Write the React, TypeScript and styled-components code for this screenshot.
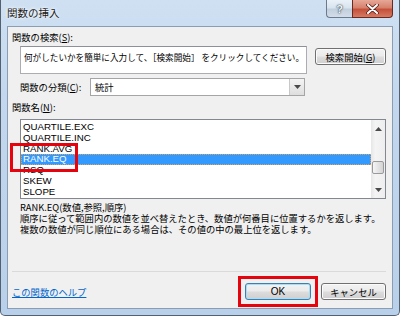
import React from 'react';
import styled, { createGlobalStyle, css } from 'styled-components';

const GlobalStyle = createGlobalStyle`
  html, body {
    margin: 0;
    padding: 0;
    background: #ffffff;
  }
  body {
    font-family: "Liberation Sans", "Noto Sans CJK JP", sans-serif;
    color: #000;
  }
`;

const Window = styled.div`
  width: 400px;
  height: 316px;
  box-sizing: border-box;
  display: flex;
  flex-direction: column;
  padding: 0 6px 6px 6px;
  border: 1px solid #52606f;
  border-top: none;
  border-radius: 0 0 5px 5px;
  background: linear-gradient(180deg, #cfe0f2 0%, #c3d8ee 30%, #b9d0ea 100%);
`;

const TitleBar = styled.div`
  height: 26px;
  display: flex;
  align-items: flex-start;
  flex-shrink: 0;
`;

const Title = styled.div`
  font-family: "Noto Sans CJK JP", sans-serif;
  font-size: 10.5px;
  line-height: 25px;
  height: 26px;
  color: #1b1b1b;
  text-shadow: 0 0 4px #ffffff, 0 0 2px #ffffff;
`;

const Caption = styled.div`
  margin-left: auto;
  display: flex;
`;

const CaptionButton = styled.div<{ $close?: boolean }>`
  height: 18px;
  box-sizing: border-box;
  display: flex;
  align-items: center;
  justify-content: center;
  color: #fff;
  font-weight: bold;
  font-size: 11px;
  ${(p) =>
    p.$close
      ? css`
          width: 41px;
          border: 1px solid #6b2a20;
          border-top: none;
          border-radius: 0 0 4px 0;
          background: linear-gradient(180deg, #e7a797 0%, #d6826d 45%, #c5503b 55%, #d57a62 100%);
        `
      : css`
          width: 26px;
          border: 1px solid #6b7a8d;
          border-top: none;
          border-right: none;
          border-radius: 0 0 0 4px;
          background: linear-gradient(180deg, #eaf1f8 0%, #d9e4ef 45%, #c1cfdd 55%, #d3dde8 100%);
          color: #eef3f8;
          text-shadow: 0 0 1px #33404e, 0 0 2px #33404e;
        `}
`;

const Client = styled.div`
  flex: 1;
  display: flex;
  flex-direction: column;
  background: #f0f0f0;
  border: 1px solid #8a9db3;
  padding: 4px 6px 0 4px;
  font-family: "Noto Sans CJK JP", sans-serif;
  font-size: 9.3px;
`;

const Label = styled.div<{ $top?: number; $indent?: number }>`
  line-height: 12px;
  height: 12px;
  white-space: nowrap;
  margin-top: ${(p) => p.$top ?? 0}px;
  padding-left: ${(p) => p.$indent ?? 0}px;
`;

const Row = styled.div<{ $top?: number; $indent?: number }>`
  display: flex;
  align-items: center;
  margin-top: ${(p) => p.$top ?? 0}px;
  padding-left: ${(p) => p.$indent ?? 0}px;
`;

const SearchBox = styled.div`
  width: 287px;
  height: 28px;
  box-sizing: border-box;
  background: #fff;
  border: 1px solid #abadb3;
  border-top-color: #8e9098;
  padding: 4px 3px 0 3px;
  font-size: 8.6px;
  line-height: 12px;
  white-space: nowrap;
  overflow: hidden;
`;

const Button = styled.div<{ $w: number; $primary?: boolean }>`
  width: ${(p) => p.$w}px;
  height: 17px;
  box-sizing: border-box;
  display: flex;
  align-items: center;
  justify-content: center;
  border-radius: 3px;
  font-size: 9.3px;
  white-space: nowrap;
  background: linear-gradient(180deg, #f2f2f2 0%, #ebebeb 48%, #dddddd 52%, #cfcfcf 100%);
  border: 1px solid ${(p) => (p.$primary ? '#3c7fb1' : '#707070')};
  box-shadow: inset 0 0 0 1px ${(p) => (p.$primary ? '#a9dcf5' : '#fbfbfb')};
`;

const SearchButton = styled(Button)`
  margin-left: auto;
  align-self: flex-start;
  margin-top: 2px;
`;

const CategoryLabel = styled.div`
  width: 70px;
  line-height: 12px;
  white-space: nowrap;
`;

const Select = styled.div`
  width: 215px;
  height: 18px;
  box-sizing: border-box;
  display: flex;
  align-items: stretch;
  background: #fff;
  border: 1px solid #a5a5a5;
`;

const SelectText = styled.div`
  flex: 1;
  padding-left: 4px;
  line-height: 16px;
`;

const SelectArrow = styled.div`
  width: 14px;
  display: flex;
  align-items: center;
  justify-content: center;
  background: linear-gradient(180deg, #f4f4f4, #dedede);
  border-left: 1px solid #c8c8c8;
`;

const ListWrap = styled.div`
  position: relative;
  margin: 6px 0 0 8px;
`;

const ListBox = styled.div`
  height: 80px;
  box-sizing: border-box;
  display: flex;
  background: #fff;
  border: 1px solid #828790;
`;

const Items = styled.div`
  flex: 1;
  padding-top: 2px;
  font-family: "Liberation Sans", sans-serif;
  font-size: 9.7px;
`;

const Item = styled.div<{ $selected?: boolean }>`
  height: 10.8px;
  line-height: 10.8px;
  padding-left: 2px;
  box-sizing: border-box;
  ${(p) =>
    p.$selected &&
    css`
      background: #3399ff;
      color: #fff;
      outline: 1px dotted #d9a15a;
      outline-offset: -1px;
    `}
`;

const ScrollBar = styled.div`
  width: 14px;
  display: flex;
  flex-direction: column;
  align-items: center;
  background: linear-gradient(90deg, #e6e6e6, #f4f4f4 30%, #eeeeee);
`;

const ScrollArrow = styled.div`
  height: 17px;
  display: flex;
  align-items: center;
  justify-content: center;
`;

const Thumb = styled.div`
  width: 12px;
  height: 13px;
  margin-top: 24px;
  box-sizing: border-box;
  border: 1px solid #9a9a9a;
  border-radius: 2px;
  background: linear-gradient(90deg, #f6f6f6, #e4e4e4 50%, #d4d4d4);
`;

const ScrollSpace = styled.div`
  flex: 1;
`;

const Callout = styled.div`
  position: absolute;
  box-sizing: border-box;
  border: 3px solid #e5040e;
  pointer-events: none;
`;

const ListCallout = styled(Callout)`
  left: -10px;
  top: 24px;
  width: 68px;
  height: 29px;
`;

const Syntax = styled.div`
  margin-top: 2px;
  padding-left: 8px;
  line-height: 12px;
`;

const Description = styled.div`
  padding-left: 8px;
  line-height: 11px;
  white-space: nowrap;
`;

const Spacer = styled.div`
  flex: 1;
`;

const Separator = styled.div`
  height: 0;
  border-top: 1px solid #dadada;
`;

const Footer = styled.div`
  display: flex;
  align-items: center;
  margin: 11px 0 8px 0;
`;

const HelpLink = styled.a`
  color: #0066cc;
  text-decoration: underline;
  line-height: 12px;
`;

const FooterButtons = styled.div`
  margin-left: auto;
  display: flex;
  gap: 10px;
`;

const OkSlot = styled.div`
  position: relative;
`;

const OkCallout = styled(Callout)`
  inset: -7px;
`;

const ButtonLatin = styled.span`
  font-family: "Liberation Sans", sans-serif;
  font-size: 10px;
`;

const Triangle = ({ dir }: { dir: 'up' | 'down' }) => (
  <svg width="7" height="4" viewBox="0 0 7 4">
    <polygon points={dir === 'up' ? '0,4 3.5,0 7,4' : '0,0 7,0 3.5,4'} fill="#4a4a4a" />
  </svg>
);

const functions = ['QUARTILE.EXC', 'QUARTILE.INC', 'RANK.AVG', 'RANK.EQ', 'RSQ', 'SKEW', 'SLOPE'];

export default function App() {
  return (
    <>
      <GlobalStyle />
      <Window>
        <TitleBar>
          <Title>関数の挿入</Title>
          <Caption>
            <CaptionButton>?</CaptionButton>
            <CaptionButton $close>
              <svg width="13" height="10" viewBox="0 0 13 10">
                <path d="M2 1 L11 9 M11 1 L2 9" stroke="#5a1e16" strokeWidth="3.6" strokeLinecap="round" />
                <path d="M2 1 L11 9 M11 1 L2 9" stroke="#ffffff" strokeWidth="2" strokeLinecap="round" />
              </svg>
            </CaptionButton>
          </Caption>
        </TitleBar>
        <Client>
          <Label>
            関数の検索(<u>S</u>):
          </Label>
          <Row $top={3} $indent={8}>
            <SearchBox>何がしたいかを簡単に入力して、［検索開始］ をクリックしてください。</SearchBox>
            <SearchButton $w={71}>
              検索開始(<u>G</u>)
            </SearchButton>
          </Row>
          <Row $top={4} $indent={8}>
            <CategoryLabel>
              関数の分類(<u>C</u>):
            </CategoryLabel>
            <Select>
              <SelectText>統計</SelectText>
              <SelectArrow>
                <Triangle dir="down" />
              </SelectArrow>
            </Select>
          </Row>
          <Label $top={5}>
            関数名(<u>N</u>):
          </Label>
          <ListWrap>
            <ListBox>
              <Items>
                {functions.map((name) => (
                  <Item key={name} $selected={name === 'RANK.EQ'}>
                    {name}
                  </Item>
                ))}
              </Items>
              <ScrollBar>
                <ScrollArrow>
                  <Triangle dir="up" />
                </ScrollArrow>
                <Thumb />
                <ScrollSpace />
                <ScrollArrow>
                  <Triangle dir="down" />
                </ScrollArrow>
              </ScrollBar>
            </ListBox>
            <ListCallout />
          </ListWrap>
          <Syntax>RANK.EQ(数値,参照,順序)</Syntax>
          <Description>順序に従って範囲内の数値を並べ替えたとき、数値が何番目に位置するかを返します。</Description>
          <Description>複数の数値が同じ順位にある場合は、その値の中の最上位を返します。</Description>
          <Spacer />
          <Separator />
          <Footer>
            <HelpLink>この関数のヘルプ</HelpLink>
            <FooterButtons>
              <OkSlot>
                <Button $w={66} $primary>
                  <ButtonLatin>OK</ButtonLatin>
                </Button>
                <OkCallout />
              </OkSlot>
              <Button $w={65}>キャンセル</Button>
            </FooterButtons>
          </Footer>
        </Client>
      </Window>
    </>
  );
}
